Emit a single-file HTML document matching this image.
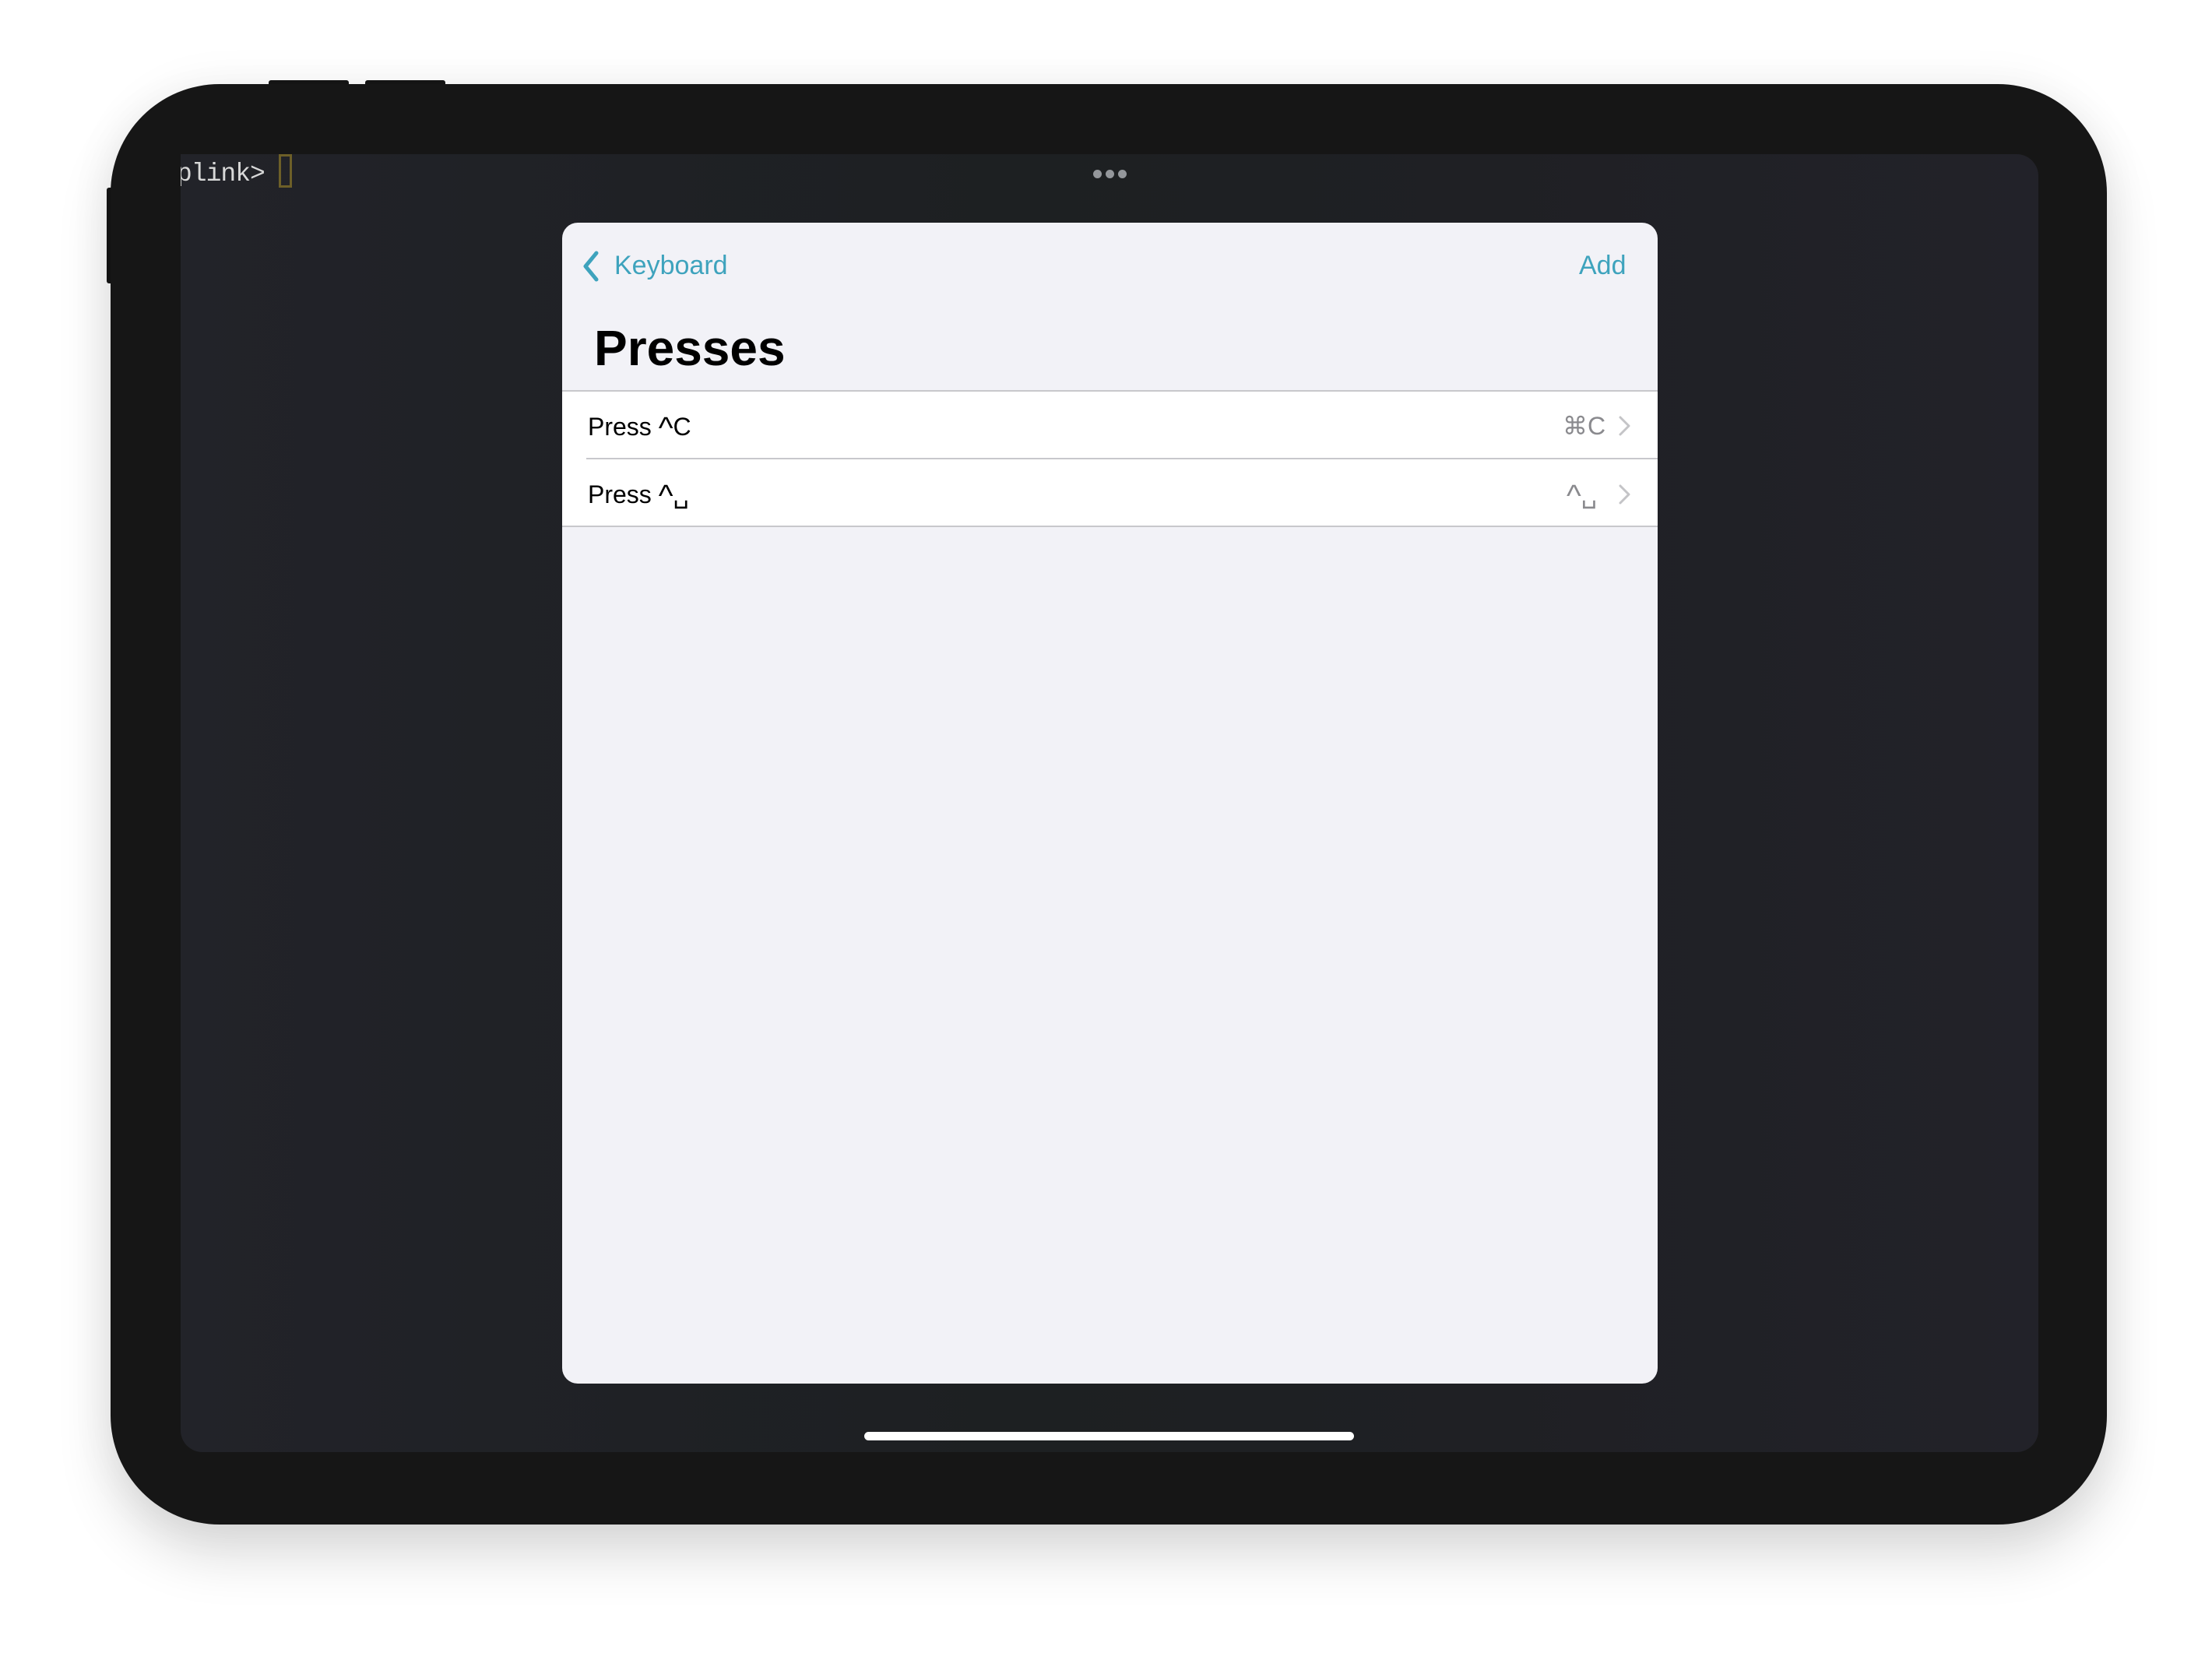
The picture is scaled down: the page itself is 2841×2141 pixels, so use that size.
<!DOCTYPE html>
<html><head><meta charset="utf-8"><style>
*{margin:0;padding:0;box-sizing:border-box}
html,body{width:2841px;height:2141px;background:#fff;overflow:hidden;font-family:"Liberation Sans",sans-serif}
.dev{position:absolute;left:142px;top:108px;width:2564px;height:1850px;background:#161616;border-radius:140px;box-shadow:0 40px 70px rgba(0,0,0,0.14),0 0 60px rgba(0,0,0,0.06)}
.btn{position:absolute;background:#161616}
.scr{position:absolute;left:232px;top:198px;width:2386px;height:1667px;overflow:hidden;border-radius:0 28px 28px 28px;background:linear-gradient(90deg,#222329 0%,#1f2125 25%,#1d2022 45%,#1f2024 70%,#222229 100%)}
.sheet{position:absolute;left:722px;top:286px;width:1407px;height:1491px;background:#f2f2f7;border-radius:20px;overflow:hidden}
.blue{color:#3ea3bd}
.row{position:absolute;left:0;width:1407px;height:87px;background:#fff}
.t{position:absolute;font-size:32px;color:#000;white-space:nowrap}
.g{position:absolute;font-size:32px;color:#8a8a8e;white-space:nowrap}
.line{position:absolute;height:2px;background:#c8c8cc}
.car{font-size:40px;vertical-align:-4px}
</style></head><body>
<div class="btn" style="left:345px;top:103px;width:103px;height:8px;border-radius:3px"></div>
<div class="btn" style="left:469px;top:103px;width:103px;height:8px;border-radius:3px"></div>
<div class="btn" style="left:137px;top:241px;width:8px;height:123px;border-radius:3px"></div>
<div class="dev"></div>
<div class="scr">
  <div style="position:absolute;left:-5px;top:7px;font-family:'Liberation Mono',monospace;font-size:33px;color:#d8d8d8;letter-spacing:-1px">plink&gt;</div>
  <div style="position:absolute;left:126px;top:0;width:17px;height:43px;border:3px solid #6d5f28"></div>
  <div style="position:absolute;left:1172px;top:20px;width:11px;height:11px;border-radius:50%;background:#94979b"></div>
  <div style="position:absolute;left:1188px;top:20px;width:11px;height:11px;border-radius:50%;background:#94979b"></div>
  <div style="position:absolute;left:1204px;top:20px;width:11px;height:11px;border-radius:50%;background:#94979b"></div>
  <div style="position:absolute;left:878px;top:1641px;width:629px;height:11px;border-radius:6px;background:#fff"></div>
</div>
<div class="sheet">
  <svg style="position:absolute;left:24px;top:36px" width="28" height="40" viewBox="0 0 28 40"><path d="M20 3 L6 20 L20 37" fill="none" stroke="#3ea3bd" stroke-width="5" stroke-linecap="round" stroke-linejoin="round"/></svg>
  <div class="blue" style="position:absolute;left:67px;top:36px;font-size:34px">Keyboard</div>
  <div class="blue" style="position:absolute;left:1306px;top:36px;font-size:34px">Add</div>
  <div style="position:absolute;left:41px;top:124px;font-size:64px;font-weight:bold;color:#000">Presses</div>
  <div class="line" style="left:0;top:215px;width:1407px"></div>
  <div class="row" style="top:217px"></div>
  <div class="t" style="left:33px;top:242px">Press <span class="car">^</span>C</div>
  <div class="g" style="left:1285px;top:242px">⌘C</div>
  <svg style="position:absolute;left:1356px;top:248px" width="18" height="26" viewBox="0 0 18 26"><path d="M3 2 L14 13 L3 24" fill="none" stroke="#c4c4c7" stroke-width="3" stroke-linecap="round" stroke-linejoin="round"/></svg>
  <div class="line" style="left:31px;top:302px;width:1376px"></div>
  <div class="row" style="top:304px;height:85px"></div>
  <div class="t" style="left:33px;top:329px">Press <span class="car">^</span>␣</div>
  <div class="g" style="left:1290px;top:329px"><span class="car">^</span>␣</div>
  <svg style="position:absolute;left:1356px;top:336px" width="18" height="26" viewBox="0 0 18 26"><path d="M3 2 L14 13 L3 24" fill="none" stroke="#c4c4c7" stroke-width="3" stroke-linecap="round" stroke-linejoin="round"/></svg>
  <div class="line" style="left:0;top:389px;width:1407px"></div>
</div>
</body></html>
